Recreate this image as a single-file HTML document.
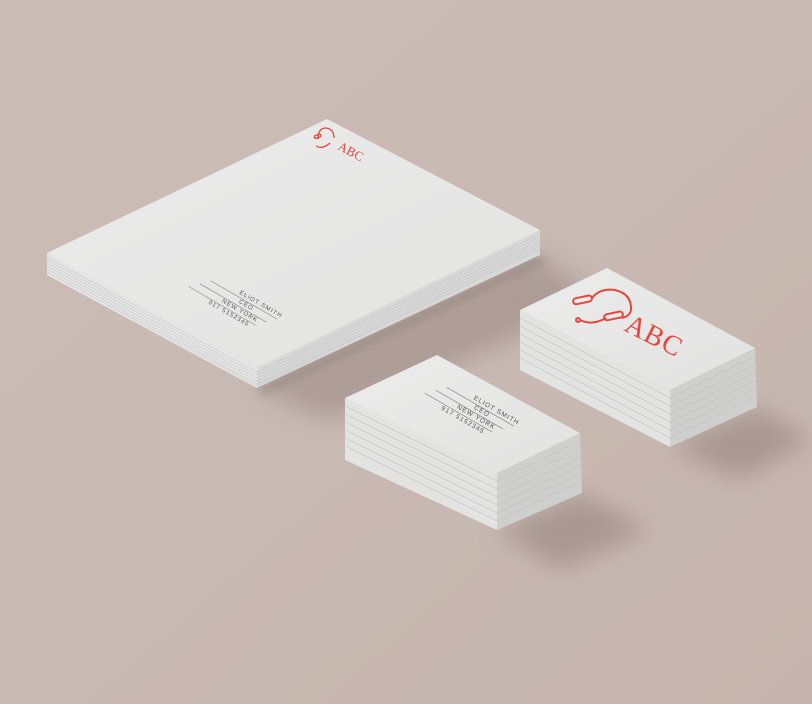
<!DOCTYPE html>
<html><head><meta charset="utf-8"><style>
html,body{margin:0;padding:0;background:#c8b9b2;}
svg{display:block}
</style></head><body>
<svg width="812" height="704" viewBox="0 0 812 704" xmlns="http://www.w3.org/2000/svg">
<defs>
<filter id="b1" x="-20%" y="-20%" width="140%" height="140%"><feGaussianBlur stdDeviation="12"/></filter>
<filter id="b2" x="-20%" y="-20%" width="140%" height="140%"><feGaussianBlur stdDeviation="5"/></filter>
<linearGradient id="top" x1="0" y1="0" x2="1" y2="1"><stop offset="0" stop-color="#ececec"/><stop offset="1" stop-color="#e2e2e1"/></linearGradient>
<linearGradient id="bg" x1="0" y1="0" x2="1" y2="1"><stop offset="0" stop-color="#cbbdb6"/><stop offset="1" stop-color="#c5b5ae"/></linearGradient>
</defs>
<rect width="812" height="704" fill="url(#bg)"/>
<polygon points="257,390 540,256 600,300 330,420" fill="#8c7a74" opacity="0.45" filter="url(#b1)"/>
<polygon points="497,530 582,493 650,530 560,570" fill="#8c7a74" opacity="0.5" filter="url(#b1)"/>
<polygon points="670,447 757,407 812,440 740,480" fill="#8c7a74" opacity="0.5" filter="url(#b1)"/>
<polygon points="257,388 540,255 545,262 262,395" fill="#7a6a65" opacity="0.5" filter="url(#b2)"/>

<polygon points="47,253 257,368 257,388 47,275" fill="#e6e6e6"/>
<polygon points="257,368 540,230 540,255 257,388" fill="#d8d8d8"/>
<g stroke="#c4c4c4" stroke-width="0.6" fill="none">
<polyline points="47,257 257,372 540,234"/><polyline points="47,260 257,375 540,237"/>
<polyline points="47,263 257,378 540,240"/><polyline points="47,266 257,381 540,243"/>
<polyline points="47,269 257,384 540,246"/><polyline points="47,272 257,386 540,249"/>
</g>
<polygon points="327,119 540,230 257,368 47,253" fill="url(#top)"/>
<g fill="none" stroke="#e0493f" stroke-width="1.3">
<path d="M318,139 Q318,128 326,128 Q334,129 334,138"/>
<rect x="314" y="135" width="7" height="3" rx="1.5" transform="rotate(-20 317 136)"/>
<path d="M316,146 Q322,150 330,143"/>
</g>
<g transform="translate(337,149) rotate(28)"><text x="0" y="0" font-family="'Liberation Serif', serif" font-size="13" fill="#e0493f">ABC</text></g>
<g transform="rotate(30 240 300)" font-family="'Liberation Sans', sans-serif" font-size="6" fill="#555" letter-spacing="1">
<line x1="205" y1="298" x2="282" y2="298" stroke="#888" stroke-width="0.6"/>
<text x="236" y="295">ELIOT SMITH</text>
<line x1="197" y1="306" x2="274" y2="306" stroke="#888" stroke-width="0.6"/>
<text x="240" y="303">CEO</text>
<line x1="189" y1="314" x2="266" y2="314" stroke="#888" stroke-width="0.6"/>
<text x="225" y="311">NEW YORK</text>
<text x="214" y="319">917 5152345</text>
</g>

<polygon points="520,310 670,390 670,447 520,370" fill="#e3e3e2"/>
<polygon points="670,390 755,348 757,407 670,447" fill="#cfcfcd"/>
<g stroke="#c0c0be" stroke-width="0.6" fill="none">
<polyline points="520,318 670,398 755,356"/><polyline points="520,326 670,406 756,364"/>
<polyline points="520,334 670,414 756,372"/><polyline points="520,342 670,422 756,380"/>
<polyline points="520,350 670,430 756,388"/><polyline points="520,358 670,438 756,396"/>
</g>
<polygon points="607,268 755,348 670,390 520,310" fill="url(#top)"/>
<g fill="none" stroke="#e5473d" stroke-width="2">
<path d="M592,298 Q600,288 615,290 Q632,294 631,310 Q630,316 622,318"/>
<rect x="573" y="297" width="19" height="6" rx="3" transform="rotate(-12 582 300)"/>
<rect x="604" y="313" width="19" height="6" rx="3" transform="rotate(-12 613 316)"/>
<path d="M580,320 Q592,326 606,318"/>
<circle cx="578" cy="320" r="2"/>
</g>
<g transform="translate(623,330) rotate(27)"><text x="0" y="0" font-family="'Liberation Serif', serif" font-size="28" fill="#e5473d" letter-spacing="1">ABC</text></g>

<polygon points="345,398 497,473 497,530 345,460" fill="#e3e3e2"/>
<polygon points="497,473 580,433 582,493 497,530" fill="#cfcfcd"/>
<g stroke="#c0c0be" stroke-width="0.6" fill="none">
<polyline points="345,406 497,481 580,441"/><polyline points="345,414 497,489 580,449"/>
<polyline points="345,422 497,497 581,457"/><polyline points="345,430 497,505 581,465"/>
<polyline points="345,438 497,513 581,473"/><polyline points="345,446 497,521 581,481"/>
</g>
<polygon points="437,355 580,433 497,473 345,398" fill="url(#top)"/>
<g transform="rotate(30 460 410)" font-family="'Liberation Sans', sans-serif" font-size="6.5" fill="#555" letter-spacing="1">
<line x1="437" y1="397" x2="515" y2="397" stroke="#777" stroke-width="0.6"/>
<text x="466" y="394">ELIOT SMITH</text>
<line x1="429" y1="405" x2="507" y2="405" stroke="#777" stroke-width="0.6"/>
<text x="471" y="402">CEO</text>
<line x1="421" y1="413" x2="499" y2="413" stroke="#777" stroke-width="0.6"/>
<text x="456" y="410">NEW YORK</text>
<text x="443" y="419">917 5152345</text>
</g>
</svg>
</body></html>
